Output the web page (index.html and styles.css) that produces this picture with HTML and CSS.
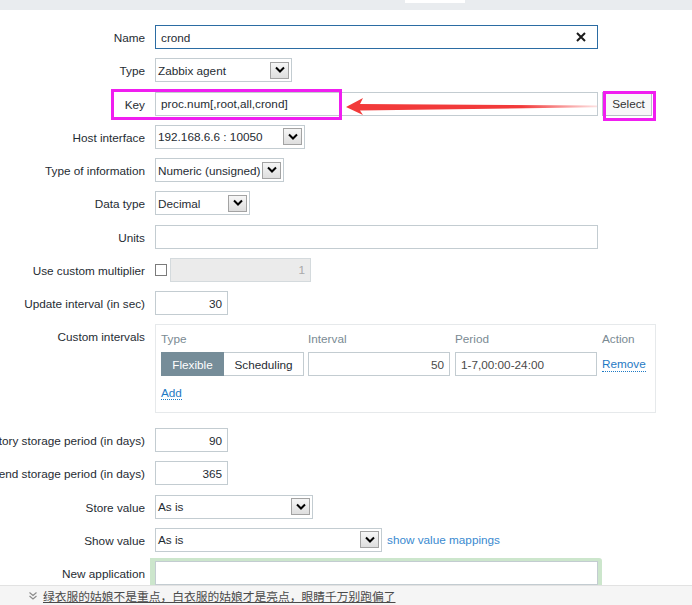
FILE: index.html
```html
<!DOCTYPE html>
<html>
<head>
<meta charset="utf-8">
<title>Item</title>
<link rel="stylesheet" href="styles.css">
</head>
<body>
<div class="topbar"><div class="tab"></div></div>
<main class="main">
  <div class="form">
    <div class="lbl"><span>Name</span></div>
    <div class="fld">
      <div class="inp wide focus"><span class="grow">crond</span>
        <svg class="clear" width="10" height="10" viewBox="0 0 10 10"><path d="M1 1 L9 9 M9 1 L1 9" stroke="#1b1b1b" stroke-width="2" fill="none"/></svg>
      </div>
    </div>

    <div class="lbl"><span>Type</span></div>
    <div class="fld">
      <div class="sel w-type"><span>Zabbix agent</span><span class="arr"><svg width="12" height="8" viewBox="0 0 12 8"><path d="M2 1.5 L6 5.5 L10 1.5" stroke="#000" stroke-width="2" fill="none"/></svg></span></div>
    </div>

    <div class="lbl"><span>Key</span></div>
    <div class="fld">
      <div class="inp wide"><span>proc.num[,root,all,crond]</span></div>
      <div class="btn">Select</div>
    </div>

    <div class="lbl"><span>Host interface</span></div>
    <div class="fld">
      <div class="sel w-host"><span>192.168.6.6 : 10050</span><span class="arr"><svg width="12" height="8" viewBox="0 0 12 8"><path d="M2 1.5 L6 5.5 L10 1.5" stroke="#000" stroke-width="2" fill="none"/></svg></span></div>
    </div>

    <div class="lbl"><span>Type of information</span></div>
    <div class="fld">
      <div class="sel w-info"><span>Numeric (unsigned)</span><span class="arr"><svg width="12" height="8" viewBox="0 0 12 8"><path d="M2 1.5 L6 5.5 L10 1.5" stroke="#000" stroke-width="2" fill="none"/></svg></span></div>
    </div>

    <div class="lbl"><span>Data type</span></div>
    <div class="fld">
      <div class="sel w-data"><span>Decimal</span><span class="arr"><svg width="12" height="8" viewBox="0 0 12 8"><path d="M2 1.5 L6 5.5 L10 1.5" stroke="#000" stroke-width="2" fill="none"/></svg></span></div>
    </div>

    <div class="lbl"><span>Units</span></div>
    <div class="fld"><div class="inp wide"></div></div>

    <div class="lbl"><span>Use custom multiplier</span></div>
    <div class="fld">
      <span class="chk"></span>
      <div class="inp num disabled w-mult"><span>1</span></div>
    </div>

    <div class="lbl"><span>Update interval (in sec)</span></div>
    <div class="fld"><div class="inp num w-num"><span>30</span></div></div>

    <div class="lbl"><span>Custom intervals</span></div>
    <div class="fld top">
      <div class="ci">
        <div class="ci-grid">
          <div class="h">Type</div>
          <div class="h">Interval</div>
          <div class="h">Period</div>
          <div class="h">Action</div>
          <div class="seg"><span class="on">Flexible</span><span class="off">Scheduling</span></div>
          <div class="inp num w-142 dim"><span>50</span></div>
          <div class="inp w-142 dim"><span>1-7,00:00-24:00</span></div>
          <div class="act"><a class="dl">Remove</a></div>
        </div>
        <div class="add"><a class="dl">Add</a></div>
      </div>
    </div>

    <div class="lbl"><span>History storage period (in days)</span></div>
    <div class="fld"><div class="inp num w-num"><span>90</span></div></div>

    <div class="lbl"><span>Trend storage period (in days)</span></div>
    <div class="fld"><div class="inp num w-num"><span>365</span></div></div>

    <div class="lbl"><span>Store value</span></div>
    <div class="fld">
      <div class="sel w-store"><span>As is</span><span class="arr"><svg width="12" height="8" viewBox="0 0 12 8"><path d="M2 1.5 L6 5.5 L10 1.5" stroke="#000" stroke-width="2" fill="none"/></svg></span></div>
    </div>

    <div class="lbl"><span>Show value</span></div>
    <div class="fld">
      <div class="sel w-show"><span>As is</span><span class="arr"><svg width="12" height="8" viewBox="0 0 12 8"><path d="M2 1.5 L6 5.5 L10 1.5" stroke="#000" stroke-width="2" fill="none"/></svg></span></div>
      <a class="link">show value mappings</a>
    </div>

    <div class="lbl"><span>New application</span></div>
    <div class="fld top">
      <div class="green"><div class="inp wide"></div></div>
    </div>
  </div>
</main>
<div class="statusbar">
  <svg class="dchev" width="10" height="10" viewBox="0 0 10 10"><path d="M1.5 1.5 L5 4.5 L8.5 1.5 M1.5 5 L5 8 L8.5 5" stroke="#8a8a8a" stroke-width="1.1" fill="none"/></svg>
  <span class="note">绿衣服的姑娘不是重点，白衣服的姑娘才是亮点，眼睛千万别跑偏了</span>
</div>

<div class="annot">
  <div class="mbox mbox-key"></div>
  <div class="mbox mbox-sel"></div>
  <svg class="arrow" width="262" height="26" viewBox="0 0 262 26">
    <defs>
      <linearGradient id="fade" x1="0" y1="0" x2="1" y2="0">
        <stop offset="0" stop-color="#f23a3a"/>
        <stop offset="0.7" stop-color="#f23a3a"/>
        <stop offset="1" stop-color="#f23a3a" stop-opacity="0.15"/>
      </linearGradient>
    </defs>
    <polygon points="6,12 23,3 20,9 257,10.6 257,12.2 20,15.5 23,20" fill="url(#fade)"/>
  </svg>
</div>
</body>
</html>
```

FILE: styles.css
```css
html, body {
  margin: 0;
  padding: 0;
}

body {
  height: 605px;
  display: flex;
  flex-direction: column;
  overflow: hidden;
  position: relative;
  background: #fff;
  color: #1f2c33;
  font-family: "Liberation Sans", Arial, sans-serif;
  font-size: 11.75px;
}

.topbar {
  flex: none;
  height: 10px;
  background: #e9ecef;
  padding-left: 405px;
}

.tab {
  width: 60px;
  height: 3px;
  background: #fff;
}

.main {
  flex: 1;
  min-height: 0;
  overflow: hidden;
}

.form {
  display: grid;
  grid-template-columns: 145px 1fr;
  column-gap: 10px;
  row-gap: 9.25px;
  margin-top: 15px;
}

.lbl {
  display: flex;
  justify-content: flex-end;
  white-space: nowrap;
  line-height: 24px;
  height: 24px;
  padding-top: 1px;
  box-sizing: border-box;
}

.fld {
  display: flex;
  align-items: center;
  min-height: 24px;
}

.fld.top {
  align-items: flex-start;
}

.inp {
  box-sizing: border-box;
  height: 24px;
  border: 1px solid #c3ccd1;
  background: #fff;
  padding: 0 5px;
  display: flex;
  align-items: center;
  white-space: nowrap;
  color: #1f2c33;
}

.inp.focus {
  border-color: #2b6ca3;
}

.grow {
  flex: 1;
}

.clear {
  margin-right: 6px;
}

.wide {
  width: 443px;
}

.num {
  justify-content: flex-end;
}

.w-num {
  width: 73px;
}

.w-mult {
  width: 141px;
  margin-left: 3px;
}

.w-142 {
  width: 142px;
}

.disabled {
  background: #ebebeb;
  border-color: #d4dadd;
  color: #a9a9a9;
}

.dim {
  color: #4a4a4a;
}

.chk {
  box-sizing: border-box;
  width: 12px;
  height: 12px;
  border: 1px solid #7b7b7b;
  background: #fff;
}

.sel {
  box-sizing: border-box;
  height: 24px;
  border: 1px solid #c3ccd1;
  background: #fff;
  padding: 0 2px 0 2px;
  display: flex;
  align-items: center;
  justify-content: space-between;
  white-space: nowrap;
}

.arr {
  box-sizing: border-box;
  width: 19px;
  height: 17px;
  border: 1px solid #a3a3a3;
  background: linear-gradient(#f6f6f6, #dedede);
  display: flex;
  align-items: center;
  justify-content: center;
  flex: none;
}

.w-type { width: 137px; }
.w-host { width: 150px; }
.w-info { width: 129px; }
.w-data { width: 95px; }
.w-store { width: 158px; }
.w-show { width: 227px; }

.btn {
  box-sizing: border-box;
  height: 24px;
  width: 50px;
  margin-left: 4px;
  border: 1px solid #b6c0c6;
  background: #f7f8f8;
  color: #333;
  display: flex;
  align-items: center;
  justify-content: center;
  padding-left: 3px;
}

.link {
  margin-left: 5px;
  color: #3a8ad0;
  white-space: nowrap;
}

.ci {
  box-sizing: border-box;
  width: 501px;
  height: 89px;
  border: 1px solid #e6e9eb;
  padding: 4px 5px 3px;
  margin-bottom: 5.5px;
}

.ci-grid {
  display: grid;
  grid-template-columns: 147px 147px 147px auto;
  row-gap: 3px;
}

.h {
  line-height: 20px;
  color: #7a8a93;
}

.seg {
  display: flex;
  height: 24px;
}

.seg span {
  box-sizing: border-box;
  height: 24px;
  display: flex;
  align-items: center;
  justify-content: center;
}

.seg .on {
  width: 63px;
  background: #768d99;
  border: 1px solid #768d99;
  color: #fff;
}

.seg .off {
  width: 80px;
  border: 1px solid #c3ccd1;
  border-left: none;
  color: #1f2c33;
}

.act {
  display: flex;
  align-items: center;
  height: 24px;
}

.dl {
  color: #1f7ac4;
  border-bottom: 1px dotted #1f7ac4;
  line-height: 14px;
}

.add {
  margin-top: 10px;
  line-height: 14px;
}

.green {
  background: #cce6cc;
  padding: 3px 4px 4px 5px;
  margin: -3px 0 0 -5px;
  border-radius: 0 3px 0 0;
}

.statusbar {
  flex: none;
  box-sizing: border-box;
  height: 20px;
  background: #f5f5f5;
  border-top: 1px solid #e2e2e2;
  display: flex;
  align-items: center;
  padding-left: 28px;
}

.dchev {
  margin-right: 5px;
}

.note {
  font-family: "Noto Sans CJK SC", "Liberation Sans", sans-serif;
  font-size: 11.75px;
  color: #4a4a4a;
  text-decoration: underline;
  white-space: nowrap;
  line-height: 16px;
}

.annot {
  position: absolute;
  left: 0;
  top: 0;
  width: 0;
  height: 0;
}

.mbox {
  position: absolute;
  box-sizing: border-box;
  border: 3px solid #f01ef0;
}

.mbox-key {
  left: 111px;
  top: 89px;
  width: 231px;
  height: 31px;
}

.mbox-sel {
  left: 603px;
  top: 91px;
  width: 53px;
  height: 30px;
}

.arrow {
  position: absolute;
  left: 340px;
  top: 95px;
}
```
